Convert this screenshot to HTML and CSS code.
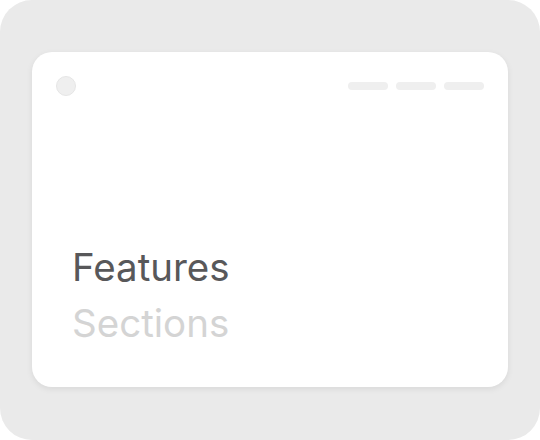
FILE: index.html
```html
<!DOCTYPE html>
<html lang="en">
<head>
  <meta charset="UTF-8">
  <title>Features</title>
  <link rel="stylesheet" href="styles.css">
</head>
<body>
  <div class="frame">
    <div class="card">
      <div class="card-top">
        <div class="dot"></div>
        <div class="bars">
          <div class="bar"></div>
          <div class="bar"></div>
          <div class="bar"></div>
        </div>
      </div>
      <div class="titles">
        <div class="title active">Features</div>
        <div class="title">Sections</div>
      </div>
    </div>
  </div>
</body>
</html>
```

FILE: styles.css
```css
body {
  margin: 0;
  background-color: #fff;
  font-family: Inter, "Noto Sans", sans-serif;
}

.frame {
  width: 540px;
  height: 440px;
  box-sizing: border-box;
  padding: 52px 32px 0 32px;
  background-color: #eaeaea;
  border-radius: 32px;
}

.card {
  height: 335px;
  box-sizing: border-box;
  padding: 24px;
  background-color: #fff;
  border-radius: 20px;
  box-shadow: 0 2px 6px rgba(0, 0, 0, 0.08);
  display: flex;
  flex-direction: column;
}

.card-top {
  display: flex;
  align-items: center;
  justify-content: space-between;
}

.dot {
  width: 18px;
  height: 18px;
  border-radius: 50%;
  background-color: #efefef;
  border: 1px solid #e6e6e6;
}

.bars {
  display: flex;
  gap: 8px;
}

.bar {
  width: 40px;
  height: 8px;
  border-radius: 4px;
  background-color: #efefef;
}

.titles {
  margin-top: auto;
  padding: 0 16px 12px 16px;
}

.title {
  font-size: 38.5px;
  line-height: 56px;
  color: #d4d4d4;
}

.title.active {
  color: #58585a;
}
```
